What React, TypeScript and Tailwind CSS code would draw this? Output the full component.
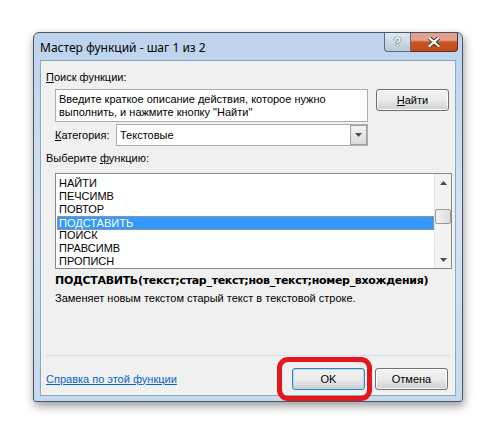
import { useState } from "react";

const functions = ["НАЙТИ", "ПЕЧСИМВ", "ПОВТОР", "ПОДСТАВИТЬ", "ПОИСК", "ПРАВСИМВ", "ПРОПИСН"];

function Button({ children, primary }: { children: React.ReactNode; primary?: boolean }) {
  return (
    <button
      className={
        "w-[73px] h-[22px] rounded-[3px] border text-[11px] text-black flex items-center justify-center bg-gradient-to-b from-[#f2f2f2] via-[#ebebeb] to-[#cfcfcf] " +
        (primary ? "border-[#3c7fb1] shadow-[inset_0_0_0_1px_#a6dcf7]" : "border-[#707070] shadow-[inset_0_0_0_1px_#fbfbfb]")
      }
    >
      {children}
    </button>
  );
}

function Arrow({ up }: { up?: boolean }) {
  return (
    <svg width="7" height="4" viewBox="0 0 7 4">
      <path d={up ? "M0 4 L3.5 0 L7 4 Z" : "M0 0 L3.5 4 L7 0 Z"} fill="#4a4a4a" />
    </svg>
  );
}

export default function App() {
  const [selected, setSelected] = useState(3);

  return (
    <div className="w-[497px] h-[439px] bg-white pl-[33px] pt-[32px] font-['Liberation_Sans',Arial,sans-serif] text-[11px] text-black">
      {/* window frame */}
      <div className="w-[430px] h-[370px] flex flex-col rounded-t-[6px] rounded-b-[3px] border border-[#4b5563] bg-gradient-to-b from-[#bcd3ec] via-[#d3e3f4] to-[#c6daef] shadow-[1px_4px_10px_rgba(0,0,0,0.4)]">
        {/* title bar */}
        <div className="h-[27px] flex items-start pl-[6px] pr-[4px]">
          <div className="pt-[7px] text-[12px] font-['Noto_Sans',sans-serif] text-black leading-[15px]">Мастер функций - шаг 1 из 2</div>
          <div className="ml-auto flex">
            <div className="w-[27px] h-[19px] border border-t-0 border-[#5c6b7c] rounded-bl-[4px] bg-gradient-to-b from-[#dde8f3] to-[#b9cadb] flex items-center justify-center text-white font-bold text-[13px] [text-shadow:0_0_1px_#333,0_0_1px_#333]">
              ?
            </div>
            <div className="w-[47px] h-[19px] border border-t-0 border-l-0 border-[#5c3020] rounded-br-[4px] bg-gradient-to-b from-[#e3a08e] from-40% via-[#c9561f] via-50% to-[#c44a17] flex items-center justify-center">
              <svg width="12" height="10" viewBox="0 0 12 10">
                <path d="M1.5 1 L10.5 9 M10.5 1 L1.5 9" stroke="#3a2a25" strokeWidth="4" strokeLinecap="square" />
                <path d="M1.5 1 L10.5 9 M10.5 1 L1.5 9" stroke="#ffffff" strokeWidth="2.2" strokeLinecap="square" />
              </svg>
            </div>
          </div>
        </div>

        {/* client area */}
        <div className="flex-1 mx-[6px] mb-[5px] border border-[#8fa6bf] bg-[#f0f0f0] flex flex-col">
          <div className="pl-[5px] pt-[10px] leading-[13px]">
            <span className="underline">П</span>оиск функции:
          </div>

          <div className="flex pl-[14px] pt-[5px]">
            <div className="w-[313px] h-[33px] border border-[#abadb3] bg-white px-[3px] pt-[3px] leading-[13px]">
              Введите краткое описание действия, которое нужно выполнить, и нажмите кнопку "Найти"
            </div>
            <div className="ml-[8px]">
              <Button>
                <span className="underline">Н</span>айти
              </Button>
            </div>
          </div>

          <div className="flex items-center pl-[14px] pt-[2px]">
            <div className="w-[61px]">
              <span className="underline">К</span>атегория:
            </div>
            <div className="w-[252px] h-[22px] border border-[#abadb3] bg-white flex items-center">
              <span className="pl-[3px]">Текстовые</span>
              <div className="ml-auto w-[17px] h-[20px] border border-[#a0a0a0] bg-gradient-to-b from-[#f4f4f4] to-[#dadada] flex items-center justify-center">
                <Arrow />
              </div>
            </div>
          </div>

          <div className="pl-[5px] pt-[6px] leading-[13px]">
            Выберите <span className="underline">ф</span>ункцию:
          </div>

          {/* function list */}
          <div className="ml-[14px] mt-[8px] w-[397px] h-[96px] border border-[#828790] bg-white flex">
            <div className="flex-1 pt-[3px] pl-[1px]">
              {functions.map((name, i) => (
                <div
                  key={name}
                  onClick={() => setSelected(i)}
                  className={
                    "h-[13px] leading-[13px] pl-[2px] " +
                    (i === selected ? "bg-[#3399ff] text-white outline outline-1 outline-dotted outline-[#d9904a] -outline-offset-1 h-[14px] leading-[14px] my-[-0.5px]" : "")
                  }
                >
                  {name}
                </div>
              ))}
            </div>
            <div className="w-[17px] bg-[#f3f3f3] border-l border-[#e6e6e6] flex flex-col items-center">
              <div className="h-[17px] flex items-center justify-center">
                <Arrow up />
              </div>
              <div className="mt-[18px] w-[16px] h-[15px] rounded-[2px] border border-[#9a9a9a] bg-gradient-to-r from-[#f3f3f3] to-[#dcdcdc]" />
              <div className="mt-auto h-[17px] flex items-center justify-center">
                <Arrow />
              </div>
            </div>
          </div>

          <div className="pl-[14px] pt-[4px] font-bold text-[11px] leading-[15px] font-['DejaVu_Sans',sans-serif] tracking-[-0.3px]">
            ПОДСТАВИТЬ(текст;стар_текст;нов_текст;номер_вхождения)
          </div>
          <div className="pl-[14px] pt-[3px] leading-[14px]">
            Заменяет новым текстом старый текст в текстовой строке.
          </div>

          <div className="mx-[5px] mt-auto border-t border-[#d3dde6]" />

          <div className="flex items-center pl-[5px] pr-[7px] pt-[12px] pb-[5px]">
            <a href="#" className="text-[#0066cc] underline">
              Справка по этой функции
            </a>
            <div className="ml-auto flex gap-[10px]">
              <div className="relative">
                <Button primary>OK</Button>
                {/* red ring drawn around the OK button */}
                <div className="absolute left-[-15px] top-[-11px] w-[95px] h-[44px] rounded-[11px] border-[5px] border-[#e3161d] pointer-events-none" />
              </div>
              <Button>Отмена</Button>
            </div>
          </div>
        </div>
      </div>
    </div>
  );
}
